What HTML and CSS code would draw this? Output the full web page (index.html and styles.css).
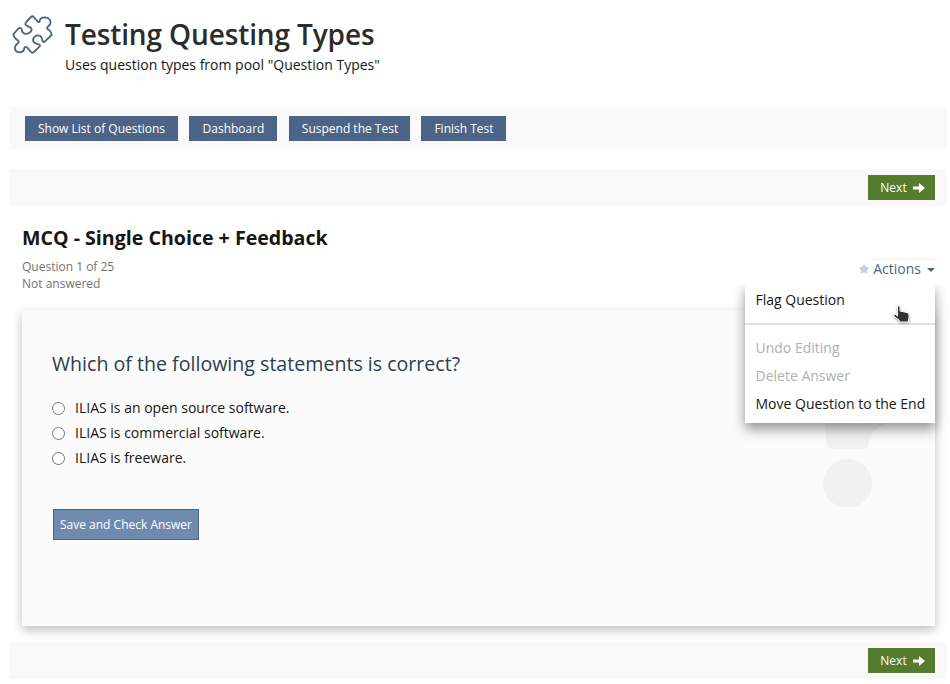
FILE: index.html
```html
<!DOCTYPE html>
<html lang="en">
<head>
<meta charset="utf-8">
<title>Testing Questing Types</title>
<link rel="stylesheet" href="styles.css">
</head>
<body>
<header class="head">
  <svg class="puzzle" viewBox="0 0 180 180"><path d="M78 36 Q82 32 86 36 L95 46 Q102 55 104 49 C104 41 110 37 120 37 Q135 38 137 52 C137 62 126 64 126 69 Q127 73 134 77 Q140 83 140 90 L119 110 Q115 113 112 106 C112 93 102 89 94 92 Q84 96 84 106 C85 117 100 115 104 120 Q107 123 101 127 L87 141 Q82 145 77 140 L68 129 Q60 122 58 129 C58 137 53 141 44 142 Q28 141 30 126 C33 116 42 116 41 110 Q41 107 32 101 Q25 95 25 88 L39 72 Q46 65 50 72 C50 84 59 88 67 86 Q79 82 80 73 C79 64 67 66 62 59 Q60 56 64 51 Z"/></svg>
  <div>
    <h1>Testing Questing Types</h1>
    <p class="sub">Uses question types from pool "Question Types"</p>
  </div>
</header>
<nav class="toolbar">
  <button class="btn b1">Show List of Questions</button>
  <button class="btn b2">Dashboard</button>
  <button class="btn b3">Suspend the Test</button>
  <button class="btn b4">Finish Test</button>
</nav>
<div class="pager">
  <button class="btn next">Next <svg viewBox="0 0 12 10"><path d="M0 3.4H6V0L12 5L6 10V6.6H0Z"/></svg></button>
</div>
<main>
  <div class="qhead">
    <div>
      <h2>MCQ - Single Choice + Feedback</h2>
      <p class="info">Question 1 of 25<br>Not answered</p>
    </div>
    <div class="actions">
      <svg class="star" viewBox="0 0 10 10"><path d="M5 0L6.8 2.800L10 3.600L8 6.200L8.200 9.600L5 8.600L1.800 9.600L2 6.200L0 3.600L3.200 2.800Z"/></svg>
      <a class="trigger">Actions<span class="caret"></span></a>
      <div class="menu">
        <div class="item first">Flag Question</div>
        <div class="item off">Undo Editing</div>
        <div class="item off">Delete Answer</div>
        <div class="item">Move Question to the End</div>
        <svg class="hand" viewBox="0 0 17 18"><path d="M4.500 1.500Q6 0 7 1.500V6L14 7.500Q16 8 16 10V13L15 17H6.500L6 15L1 11.500Q0 9 2.500 9.400L4.500 11Z"/></svg>
      </div>
    </div>
  </div>
  <section class="card">
    <h3>Which of the following statements is correct?</h3>
    <label><input type="radio" name="a">ILIAS is an open source software.</label>
    <label><input type="radio" name="a">ILIAS is commercial software.</label>
    <label><input type="radio" name="a">ILIAS is freeware.</label>
    <button class="save">Save and Check Answer</button>
    <svg class="mark" viewBox="0 0 100 100"><path d="M3 0V18Q3 26 11 26H38Q46 26 46 18C46 9 54 6 62 0Z"/><clipPath id="flat"><rect y="36" width="60" height="48"/></clipPath><circle cx="24.500" cy="60.500" r="24.500" clip-path="url(#flat)"/></svg>
  </section>
</main>
<div class="pager bottom">
  <button class="btn next">Next <svg viewBox="0 0 12 10"><path d="M0 3.400H6V0L12 5L6 10V6.600H0Z"/></svg></button>
</div>
</body>
</html>
```
FILE: styles.css
```css
* { box-sizing: border-box; }
body { margin: 0; background: #fff; color: #161616; font: 14px/20px "Open Sans", sans-serif; overflow: hidden; }
h1, h2, h3, p { margin: 0; }
.head { display: flex; height: 107px; padding: 5px 0 0 5px; }
.puzzle { width: 60px; height: 60px; flex: none; fill: #fff; stroke: #4c6586; stroke-width: 5.5; stroke-linejoin: round; }
h1 { font-size: 28px; line-height: 40px; font-weight: 600; letter-spacing: -.12px; color: #2c2c2c; padding-top: 9px; }
.sub { line-height: 20px; margin-top: 1px; }
.toolbar { display: flex; gap: 11px; align-items: center; height: 42px; margin: 0 3px 20px 10px; padding-left: 15px; background: #f9f9f9; }
.btn { height: 25px; padding: 0; border: 0; background: #4c6586; color: #fff; font: 12px/17px "Open Sans", sans-serif; }
.b1 { width: 153px; }
.b2 { width: 88px; padding-left: 1px; }
.b3 { width: 121px; margin-left: 1px; padding-left: 1px; }
.b4 { width: 85px; padding-left: 1px; }
.pager { display: flex; justify-content: flex-end; align-items: center; height: 37px; margin: 0 3px 0 10px; padding-right: 12px; background: #f9f9f9; }
.next { display: flex; align-items: center; justify-content: center; gap: 6px; width: 67px; padding-left: 2px; background: #557b2e; }
.next svg { width: 12px; height: 10px; fill: #fff; }
main { padding: 0 15px 16px 22px; }
.qhead { display: flex; justify-content: space-between; height: 104px; padding-top: 18px; }
h2 { font-size: 19.6px; line-height: 28px; font-weight: 700; }
.info { margin-top: 6px; font-size: 12px; line-height: 17px; color: #737373; }
.actions { position: relative; display: flex; align-items: center; gap: 4px; height: 20px; margin-top: 35px; }
.star { width: 10px; height: 10px; fill: #c8cee0; }
.trigger { display: flex; align-items: center; height: 20px; padding-bottom: 2px; border-top: 1px solid #eee; color: #4c6586; }
.caret { margin: 2px 0 0 6px; border: 4px solid transparent; border-top-color: #4c6586; border-bottom: 0; }
.menu { position: absolute; z-index: 2; top: 25px; right: 0; width: 190px; height: 139px; background: #fff; box-shadow: 0 6px 12px rgba(0, 0, 0, .42); clip-path: inset(0 -20px -30px -20px); }
.item { height: 28px; padding: 4px 10.5px; white-space: nowrap; }
.first { height: 41px; padding-top: 6px; margin-bottom: 9px; border-bottom: 2px solid #e2e2e2; }
.off { color: #b0b0b0; }
.hand { position: absolute; left: 148px; top: 21px; width: 17px; height: 18px; fill: #303030; stroke: #fff; stroke-width: 1; filter: drop-shadow(0 1px 1px #999); }
.card { position: relative; display: flex; flex-direction: column; height: 316px; padding: 40px 30px; background: #fbfbfb; box-shadow: 0 4px 10px rgba(0, 0, 0, .26); }
h3 { margin-bottom: 18px; font-size: 19.6px; line-height: 27px; font-weight: 400; color: #2c3e50; }
label { display: flex; align-items: center; height: 25px; line-height: 20px; }
input { width: 13px; height: 13px; margin: 1px 10px 0 0; }
.save { width: 146px; height: 31px; margin: 39px 0 0 1px; padding: 0; border: 1px solid #4c6586; background: #6f8aaf; color: #fff; font: 12px/17px "Open Sans", sans-serif; }
.mark { position: absolute; left: 801px; top: 113px; width: 100px; height: 100px; fill: #f1f1f1; }
```
